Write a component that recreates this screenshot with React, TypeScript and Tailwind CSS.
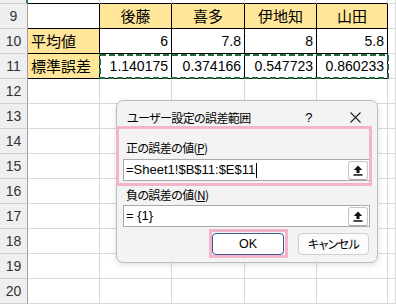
import React from "react";

type Cell = { text: string; kind: "blank" | "head" | "label" | "num" };

const cols = ["A", "B", "C", "D", "E", "F"];

const table: Record<number, Cell[]> = {
  9: [
    { text: "", kind: "blank" },
    { text: "後藤", kind: "head" },
    { text: "喜多", kind: "head" },
    { text: "伊地知", kind: "head" },
    { text: "山田", kind: "head" },
  ],
  10: [
    { text: "平均値", kind: "label" },
    { text: "6", kind: "num" },
    { text: "7.8", kind: "num" },
    { text: "8", kind: "num" },
    { text: "5.8", kind: "num" },
  ],
  11: [
    { text: "標準誤差", kind: "label" },
    { text: "1.140175", kind: "num" },
    { text: "0.374166", kind: "num" },
    { text: "0.547723", kind: "num" },
    { text: "0.860233", kind: "num" },
  ],
};

const rows = [8, 9, 10, 11, 12, 13, 14, 15, 16, 17, 18, 19, 20];

const jp = "[font-family:'Noto_Sans_CJK_JP',sans-serif]";

function UploadButton() {
  return (
    <div className="w-[20px] h-[19px] mr-[1px] bg-white border border-[#c4c4c4] border-b-[#a8a8a8] rounded-[3px] flex items-center justify-center">
      <svg width="10" height="11" viewBox="0 0 10 11">
        <path d="M5 0.5 L9.2 5 H6.5 V8 H3.5 V5 H0.8 Z" fill="#111" />
        <rect x="0.5" y="9.2" width="9" height="1.5" fill="#111" />
      </svg>
    </div>
  );
}

function Dialog() {
  return (
    <div
      className={`absolute left-[116px] top-[100px] w-[262px] h-[163px] bg-[#f3f3f3] border border-[#bcbcbc] rounded-[7px] shadow-[0_2px_6px_rgba(0,0,0,0.12)] flex flex-col ${jp} [font-feature-settings:"palt"] tracking-[-0.6px] text-[12px] text-black`}
    >
      <div className="h-[33px] flex items-center pl-[10px] pr-[16px]">
        <span className="flex-1">ユーザー設定の誤差範囲</span>
        <span className="text-[13px] mr-[38px] [font-family:'Liberation_Sans',sans-serif]">?</span>
        <svg width="11" height="11" viewBox="0 0 11 11">
          <path d="M0.5 0.5 L10.5 10.5 M10.5 0.5 L0.5 10.5" stroke="#222" strokeWidth="1.1" />
        </svg>
      </div>
      <div className="flex flex-col pl-[6px] pr-[7px]">
        <div className="h-[25px] flex items-center pt-[3px] pl-[3px]">
          正の誤差の値(<span className="underline">P</span>)
        </div>
        <div className="h-[22px] bg-white border border-[#a9a9a9] flex items-center pl-[2px] tracking-normal">
          <span className="flex-1 flex items-center text-[13px] [font-family:'Liberation_Sans',sans-serif]">
            =Sheet1!$B$11:$E$11
            <span className="inline-block w-[1px] h-[15px] bg-black ml-[1px]" />
          </span>
          <UploadButton />
        </div>
        <div className="h-[24px] flex items-center pt-[3px] pl-[3px]">
          負の誤差の値(<span className="underline">N</span>)
        </div>
        <div className="h-[22px] bg-white border border-[#a9a9a9] flex items-center pl-[2px] tracking-normal">
          <span className="flex-1 text-[13px] [font-family:'Liberation_Sans',sans-serif]">= {"{1}"}</span>
          <UploadButton />
        </div>
        <div className="flex justify-end gap-[14px] mt-[6px] pr-[1px]">
          <button className="w-[72px] h-[22px] bg-white border border-[#3c5a96] rounded-[4px] text-[12.5px] tracking-normal [font-family:'Liberation_Sans',sans-serif]">
            OK
          </button>
          <button className="w-[71px] h-[22px] bg-[#fbfbfb] border border-[#d0d0d0] rounded-[4px] text-[12px]">
            キャンセル
          </button>
        </div>
      </div>
    </div>
  );
}

export default function App() {
  return (
    <div className="relative w-[396px] h-[304px] overflow-hidden bg-white">
      <div className="grid grid-cols-[28px_72px_72px_73px_72px_71px_1fr] grid-rows-[4px_repeat(12,25px)]">
        {rows.map((r) => (
          <React.Fragment key={r}>
            <div
              className={`bg-[#efefef] border-b border-[#d0d0d0] border-r ${
                r === 8 ? "border-r-[#2e7d4f] border-r-2" : "border-r-[#a0a0a0]"
              } flex items-center justify-center text-[14px] text-[#333] [font-family:'Liberation_Sans',sans-serif]`}
            >
              {r === 8 ? "" : r}
            </div>
            {cols.map((c, ci) => {
              const cell = table[r]?.[ci];
              const inTable = r >= 9 && r <= 11 && ci < 5;
              const topOfTable = r === 8 && ci < 5;
              let cls = "border-r border-b border-[#d9d9d9]";
              if (inTable) cls = "border-r border-b border-black";
              if (topOfTable) cls = "border-r border-r-[#d9d9d9] border-b border-b-black";
              let content: React.ReactNode = null;
              if (cell) {
                if (cell.kind === "head") {
                  cls += ` bg-[#ffe699] justify-center ${jp} text-[15px]`;
                } else if (cell.kind === "label") {
                  cls += ` bg-[#ffe699] pl-[3px] ${jp} text-[15px]`;
                } else if (cell.kind === "num") {
                  cls += " justify-end pr-[3px] text-[14px] [font-family:'Liberation_Sans',sans-serif]";
                }
                content = cell.text;
              }
              return (
                <div key={c} className={`${cls} flex items-center text-black whitespace-nowrap`}>
                  {content}
                </div>
              );
            })}
          </React.Fragment>
        ))}
      </div>

      {/* copy selection marching ants */}
      <svg className="absolute left-0 top-0 pointer-events-none" width="396" height="304">
        <rect x="100" y="55" width="288" height="23" fill="none" stroke="#1f6e3d" strokeWidth="2" strokeDasharray="6 3" />
      </svg>

      <Dialog />

      {/* pink annotation boxes */}
      <div className="absolute left-[116px] top-[126px] w-[256px] h-[60px] border-[3px] border-[#f4b4c8] pointer-events-none" />
      <div className="absolute left-[209px] top-[229px] w-[79px] h-[29px] border-[3px] border-[#f4b4c8] pointer-events-none" />
    </div>
  );
}
